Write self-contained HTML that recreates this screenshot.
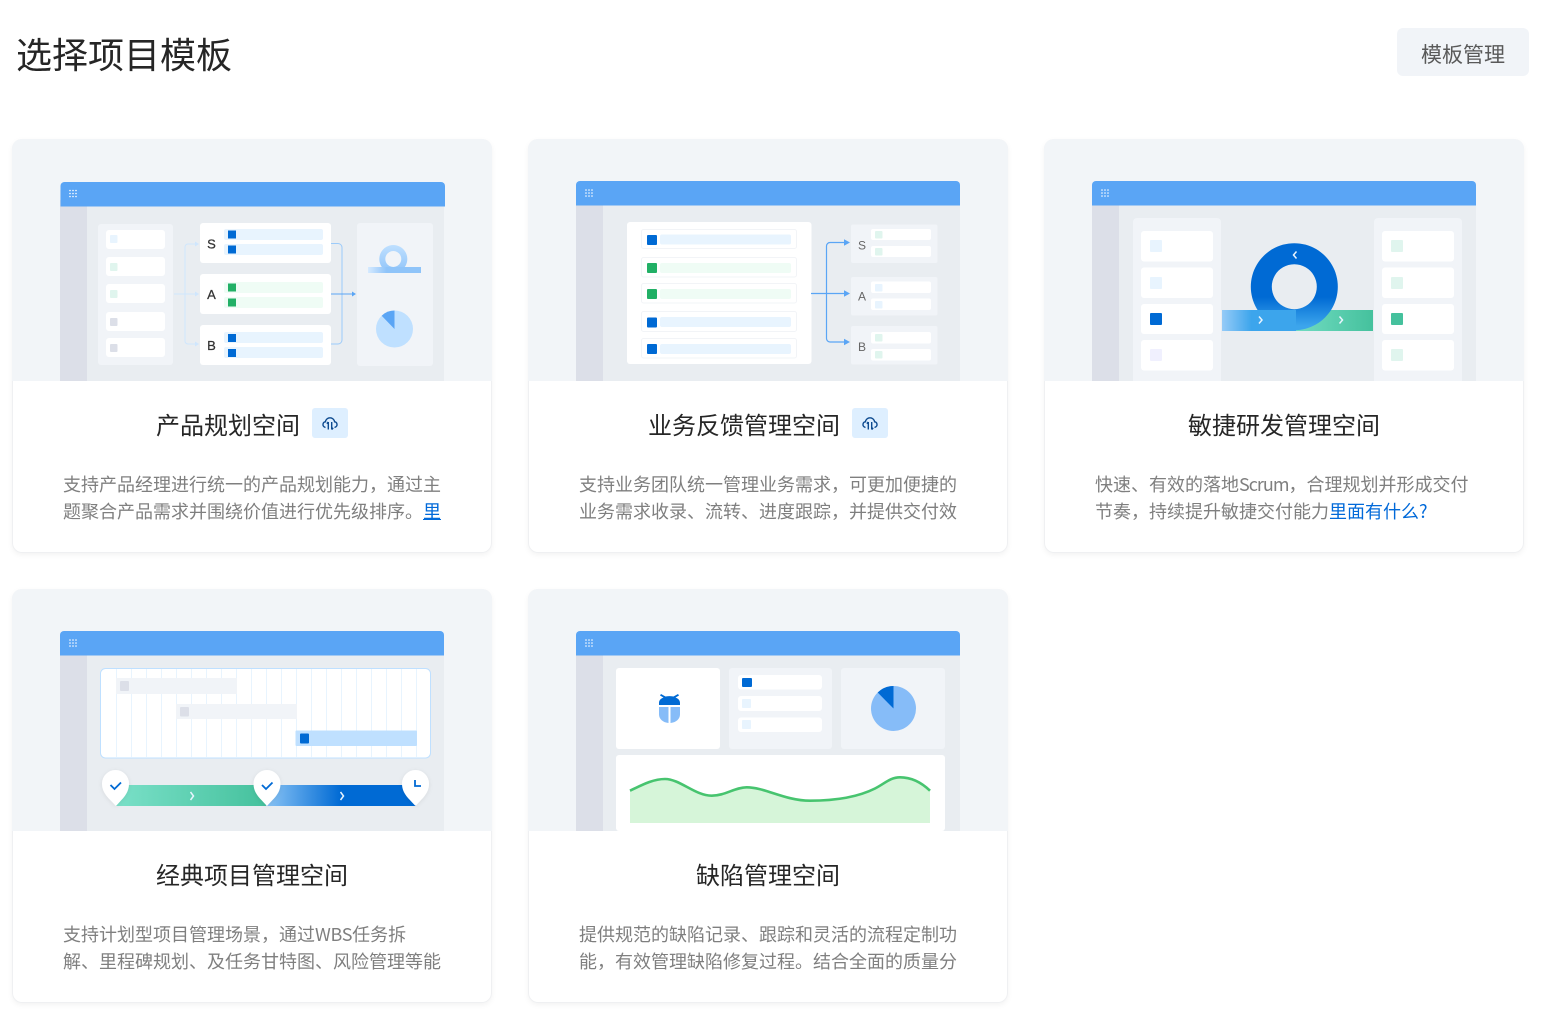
<!DOCTYPE html>
<html lang="zh-CN"><head><meta charset="utf-8"><title>选择项目模板</title>
<style>
*{box-sizing:border-box}
html,body{margin:0;padding:0;background:#fff}
body{width:1557px;height:1020px;position:relative;overflow:hidden;font-family:"Liberation Sans","Noto Sans CJK SC",sans-serif}
h1{position:absolute;left:16px;top:30px;margin:0;font-size:36px;line-height:52px;font-weight:400;color:#262626}
.btn{position:absolute;left:1397px;top:28px;width:132px;height:48px;border-radius:6px;background:#f1f4f8;color:#595959;font-size:21px;line-height:56px;text-align:center}
.card{position:absolute;width:480px;height:413.500px;border-radius:10px;background:#fff;box-shadow:inset 0 0 0 1px #eff0f2,0 2px 6px rgba(0,0,0,.05);overflow:hidden}
.top{position:absolute;left:0;top:0;width:480px;height:242px;background:#f2f5f8}
.top svg{display:block}
.t{position:absolute;left:0;right:0;top:266px;height:44px;display:flex;justify-content:center;align-items:center;font-size:24px;line-height:44px;color:#262626;white-space:nowrap}
.badge{display:inline-block;width:36px;height:30px;margin-left:12px;border-radius:3px;background:#deefff;position:relative;top:-4px}
.badge svg{position:absolute;left:10px;top:7px}
.d{position:absolute;left:51px;top:332px;width:400px;font-family:"Noto Sans CJK SC","Liberation Sans",sans-serif;font-size:18px;line-height:27px;color:#7f7f7f;white-space:nowrap}
.d a{color:#0069d9;text-decoration:none}
.d a.u{text-decoration:underline}
</style></head><body>
<h1>选择项目模板</h1>
<div class="btn">模板管理</div>

<div class="card" style="left:12px;top:139px">
<div class="top"><svg width="480" height="242" viewBox="12 139 480 242" xmlns="http://www.w3.org/2000/svg">
<defs><linearGradient id="m1" x1="0" x2="1" y1="0" y2="0"><stop offset="0" stop-color="#d6eaff"/><stop offset=".35" stop-color="#8fc4f9"/><stop offset="1" stop-color="#8fc4f9"/></linearGradient>
<linearGradient id="m2" x1="0" x2="0" y1="0" y2="1"><stop offset="0" stop-color="#bfe0ff"/><stop offset="1" stop-color="#8fc4f9"/></linearGradient></defs>
<rect x="60" y="190" width="384" height="191" fill="#e9edf1"/><rect x="60" y="200" width="27" height="181" fill="#dcdfe8"/>
<path d="M60.500 206.500V186a4 4 0 0 1 4-4H441a4 4 0 0 1 4 4v20.500z" fill="#5aa5f5"/>
<g fill="#fff"><circle cx="70" cy="190.500" r=".8"/><circle cx="73" cy="190.500" r=".8"/><circle cx="76" cy="190.500" r=".8"/><circle cx="70" cy="193.500" r=".8"/><circle cx="73" cy="193.500" r=".8"/><circle cx="76" cy="193.500" r=".8"/><circle cx="70" cy="196.500" r=".8"/><circle cx="73" cy="196.500" r=".8"/><circle cx="76" cy="196.500" r=".8"/></g>
<rect x="98" y="224" width="75" height="141" rx="3" fill="#f1f4f8"/>
<g fill="#fff"><rect x="106" y="230" width="59" height="19" rx="3"/><rect x="106" y="257" width="59" height="19" rx="3"/><rect x="106" y="284" width="59" height="19" rx="3"/><rect x="106" y="312" width="59" height="19" rx="3"/><rect x="106" y="338" width="59" height="19" rx="3"/></g>
<rect x="110" y="235" width="7.500" height="8" rx="1" fill="#e8f4fe"/><rect x="110" y="263" width="7.500" height="8" rx="1" fill="#e0f5ee"/><rect x="110" y="290" width="7.500" height="8" rx="1" fill="#e0f5ee"/><rect x="110" y="318" width="7.500" height="8" rx="1" fill="#dcdfe8"/><rect x="110" y="344" width="7.500" height="8" rx="1" fill="#dcdfe8"/>
<g fill="none" stroke="#cfe6fd" stroke-width="1"><path d="M174 294H197M197 244H188a3 3 0 0 0-3 3V341a3 3 0 0 0 3 3H197"/></g>
<g fill="#cfe6fd"><path d="M199 244l-4-2.500v5zM199 294l-4-2.500v5zM199 344l-4-2.500v5z"/></g>
<g fill="#fff"><rect x="200" y="223" width="131" height="40" rx="3"/><rect x="200" y="274" width="131" height="40" rx="3"/><rect x="200" y="325" width="131" height="40" rx="3"/></g>
<g fill="#e8f4fe"><rect x="224" y="229" width="99" height="11" rx="2"/><rect x="224" y="244" width="99" height="11" rx="2"/><rect x="224" y="332" width="99" height="11" rx="2"/><rect x="224" y="347" width="99" height="11" rx="2"/></g>
<g fill="#effcf5"><rect x="224" y="282" width="99" height="11" rx="2"/><rect x="224" y="297" width="99" height="11" rx="2"/></g>
<g fill="#006ad4"><rect x="228" y="230.500" width="8" height="8"/><rect x="228" y="245.500" width="8" height="8"/><rect x="228" y="334" width="8" height="8"/><rect x="228" y="349" width="8" height="8"/></g>
<g fill="#22b066"><rect x="228" y="283.500" width="8" height="8"/><rect x="228" y="298.500" width="8" height="8"/></g>
<g font-family="Liberation Sans" font-size="13" fill="#333" stroke="#333" stroke-width=".25" text-anchor="middle"><text x="211.500" y="248.500">S</text><text x="211.500" y="299">A</text><text x="211.500" y="350">B</text></g>
<path d="M331 243.500H338a4 4 0 0 1 4 4V340a4 4 0 0 1-4 4H331" fill="none" stroke="#9ccbfa" stroke-width="1"/>
<path d="M331 294H352" stroke="#5aa5f5" stroke-width="1" fill="none"/><path d="M356 294l-4-2.500v5z" fill="#5aa5f5"/>
<rect x="357" y="223" width="76" height="143" rx="3" fill="#f1f4f8"/>
<path d="M393.300 245a14 14 0 1 0 .01 0zM393.300 251a8 8 0 1 1-.01 0z" fill="url(#m2)" fill-rule="evenodd"/>
<rect x="368" y="267" width="53" height="6" fill="url(#m1)"/>
<circle cx="394.500" cy="329" r="18.500" fill="#bfe0ff"/><path d="M394.500 329V310.500A18.500 18.500 0 0 0 381.700 315.700z" fill="#5aa5f5"/>
</svg></div>
<div class="t">产品规划空间<span class="badge"><svg width="16" height="16" viewBox="0 0 16 16" fill="none" stroke="#0d4a8f" stroke-width="1.400"><path d="M3.500 12.500C1.500 12 .8 10.500 1 9.200 1.200 7.800 2.300 6.900 3.400 6.800 3.800 4.300 5.800 2.800 8 2.800s4.200 1.500 4.600 4c1.100.1 2.200 1 2.400 2.400.2 1.300-.5 2.800-2.500 3.300"/><path d="M6.300 14.500V7M4.800 8.600 6.300 7M9.700 7v7.500M9.700 14.500l1.500-1.600"/></svg></span></div>
<div class="d">支持产品经理进行统一的产品规划能力，通过主<br>题聚合产品需求并围绕价值进行优先级排序。<a class="u" href="#">里</a></div>
</div>

<div class="card" style="left:528px;top:139px">
<div class="top"><svg width="480" height="242" viewBox="528 139 480 242" xmlns="http://www.w3.org/2000/svg">
<rect x="576" y="190" width="384" height="191" fill="#e9edf1"/><rect x="576" y="200" width="27" height="181" fill="#dcdfe8"/>
<path d="M576 205.500V185a4 4 0 0 1 4-4H956a4 4 0 0 1 4 4v20.500z" fill="#5aa5f5"/>
<g fill="#fff"><circle cx="586" cy="190" r=".8"/><circle cx="589" cy="190" r=".8"/><circle cx="592" cy="190" r=".8"/><circle cx="586" cy="193" r=".8"/><circle cx="589" cy="193" r=".8"/><circle cx="592" cy="193" r=".8"/><circle cx="586" cy="196" r=".8"/><circle cx="589" cy="196" r=".8"/><circle cx="592" cy="196" r=".8"/></g>
<rect x="627" y="222" width="184.500" height="142" rx="3" fill="#fff"/>
<g fill="#fff" stroke="#f2f4f7"><rect x="641.500" y="229.500" width="155" height="19" rx="2"/><rect x="641.500" y="257.500" width="155" height="19.500" rx="2"/><rect x="641.500" y="283.500" width="155" height="19.500" rx="2"/><rect x="641.500" y="311.500" width="155" height="20" rx="2"/><rect x="641.500" y="338.500" width="155" height="19.500" rx="2"/></g>
<g fill="#e8f4fe"><rect x="660" y="234.500" width="131" height="10" rx="2"/><rect x="660" y="317" width="131" height="10" rx="2"/><rect x="660" y="344" width="131" height="10" rx="2"/></g>
<g fill="#effcf5"><rect x="660" y="263" width="131" height="10" rx="2"/><rect x="660" y="289" width="131" height="10" rx="2"/></g>
<g fill="#006ad4"><rect x="647" y="235" width="10" height="10" rx="1"/><rect x="647" y="317.500" width="10" height="10" rx="1"/><rect x="647" y="344" width="10" height="10" rx="1"/></g>
<g fill="#22b066"><rect x="647" y="263" width="10" height="10" rx="1"/><rect x="647" y="289" width="10" height="10" rx="1"/></g>
<path d="M811 293.500H845M845 242.500H830a3.500 3.500 0 0 0-3.500 3.500V338.500a3.500 3.500 0 0 0 3.500 3.500H845" fill="none" stroke="#5aa5f5" stroke-width="1.200"/>
<path d="M850 242.500l-6-3.200v6.400zM850 293.500l-6-3.200v6.400zM850 342l-6-3.200v6.400z" fill="#5aa5f5"/>
<g fill="#f1f4f8"><rect x="851" y="224.500" width="86.500" height="38.500" rx="2"/><rect x="851" y="277" width="86.500" height="38.500" rx="2"/><rect x="851" y="326" width="86.500" height="38.500" rx="2"/></g>
<g fill="#fff"><rect x="871" y="229" width="60" height="11" rx="2"/><rect x="871" y="246" width="60" height="11" rx="2"/><rect x="871" y="281.500" width="60" height="11.500" rx="2"/><rect x="871" y="298.500" width="60" height="11.500" rx="2"/><rect x="871" y="332" width="60" height="11.500" rx="2"/><rect x="871" y="349" width="60" height="11.500" rx="2"/></g>
<g fill="#e0f5ee"><rect x="875" y="231" width="7.500" height="7.500" rx="1"/><rect x="875" y="248" width="7.500" height="7.500" rx="1"/><rect x="875" y="334" width="7.500" height="7.500" rx="1"/><rect x="875" y="351" width="7.500" height="7.500" rx="1"/></g>
<g fill="#e8f4fe"><rect x="875" y="284" width="7.500" height="7.500" rx="1"/><rect x="875" y="301" width="7.500" height="7.500" rx="1"/></g>
<g font-family="Liberation Sans" font-size="12" fill="#666" text-anchor="middle"><text x="862" y="249.500">S</text><text x="862" y="300.500">A</text><text x="862" y="351">B</text></g>
</svg></div>
<div class="t">业务反馈管理空间<span class="badge"><svg width="16" height="16" viewBox="0 0 16 16" fill="none" stroke="#0d4a8f" stroke-width="1.400"><path d="M3.500 12.500C1.500 12 .8 10.500 1 9.200 1.200 7.800 2.300 6.900 3.400 6.800 3.800 4.300 5.800 2.800 8 2.800s4.200 1.500 4.600 4c1.100.1 2.200 1 2.400 2.400.2 1.300-.5 2.800-2.500 3.300"/><path d="M6.300 14.500V7M4.800 8.600 6.300 7M9.700 7v7.500M9.700 14.500l1.500-1.600"/></svg></span></div>
<div class="d">支持业务团队统一管理业务需求，可更加便捷的<br>业务需求收录、流转、进度跟踪，并提供交付效</div>
</div>

<div class="card" style="left:1044px;top:139px">
<div class="top"><svg width="480" height="242" viewBox="1044 139 480 242" xmlns="http://www.w3.org/2000/svg">
<defs><linearGradient id="r1" x1="0" x2="0" y1="0" y2="1"><stop offset="0" stop-color="#006ad4"/><stop offset=".62" stop-color="#006ad4"/><stop offset=".95" stop-color="#3ca5ec"/></linearGradient>
<linearGradient id="b1" x1="0" x2="1" y1="0" y2="0"><stop offset="0" stop-color="#96cbf7"/><stop offset=".4" stop-color="#3ca5ec"/><stop offset="1" stop-color="#3ca5ec"/></linearGradient>
<linearGradient id="g1" x1="0" x2="1" y1="0" y2="0"><stop offset="0" stop-color="#72dcc2"/><stop offset="1" stop-color="#45c19d"/></linearGradient></defs>
<rect x="1092" y="190" width="384" height="191" fill="#e9edf1"/><rect x="1092" y="200" width="27" height="181" fill="#dcdfe8"/>
<path d="M1092 205.500V185a4 4 0 0 1 4-4H1472a4 4 0 0 1 4 4v20.500z" fill="#5aa5f5"/>
<g fill="#fff"><circle cx="1102" cy="190" r=".8"/><circle cx="1105" cy="190" r=".8"/><circle cx="1108" cy="190" r=".8"/><circle cx="1102" cy="193" r=".8"/><circle cx="1105" cy="193" r=".8"/><circle cx="1108" cy="193" r=".8"/><circle cx="1102" cy="196" r=".8"/><circle cx="1105" cy="196" r=".8"/><circle cx="1108" cy="196" r=".8"/></g>
<path d="M1133 381V222a4 4 0 0 1 4-4h80a4 4 0 0 1 4 4v159zM1374 381V222a4 4 0 0 1 4-4h80a4 4 0 0 1 4 4v159z" fill="#f1f4f8"/>
<g fill="#fff"><rect x="1141" y="231" width="72" height="30.500" rx="3"/><rect x="1141" y="267.500" width="72" height="30.500" rx="3"/><rect x="1141" y="304" width="72" height="30" rx="3"/><rect x="1141" y="340" width="72" height="30.500" rx="3"/><rect x="1382" y="231" width="72" height="30.500" rx="3"/><rect x="1382" y="267.500" width="72" height="30.500" rx="3"/><rect x="1382" y="304" width="72" height="30" rx="3"/><rect x="1382" y="340" width="72" height="30.500" rx="3"/></g>
<rect x="1150" y="240" width="12" height="12" rx="1" fill="#e8f4fe"/><rect x="1150" y="277" width="12" height="12" rx="1" fill="#e8f4fe"/><rect x="1150" y="313" width="12" height="12" rx="1" fill="#006ad4"/><rect x="1150" y="349" width="12" height="12" rx="1" fill="#f0f0fe"/>
<rect x="1391" y="240" width="12" height="12" rx="1" fill="#e0f5ee"/><rect x="1391" y="277" width="12" height="12" rx="1" fill="#e0f5ee"/><rect x="1391" y="313" width="12" height="12" rx="1" fill="#45c19d"/><rect x="1391" y="349" width="12" height="12" rx="1" fill="#e0f5ee"/>
<rect x="1295" y="310" width="78" height="21" fill="url(#g1)"/>
<path d="M1294.300 243.200a43.500 43.500 0 1 0 .01 0zM1294.300 264.200a22.500 22.500 0 1 1-.01 0z" fill="url(#r1)" fill-rule="evenodd"/>
<rect x="1222" y="310" width="74" height="21" fill="url(#b1)"/>
<g fill="none" stroke="#e8f4fe" stroke-width="1.500"><path d="M1296.500 251.500l-3 3.500 3 3.500M1259 316.500l3 3.500-3 3.500M1339.500 316.500l3 3.500-3 3.500"/></g>
</svg></div>
<div class="t">敏捷研发管理空间</div>
<div class="d">快速、有效的落地<span style="letter-spacing:-1px">Scrum</span>，合理规划并形成交付<br>节奏，持续提升敏捷交付能力<a href="#">里面有什么?</a></div>
</div>

<div class="card" style="left:12px;top:589px">
<div class="top"><svg width="480" height="242" viewBox="12 589 480 242" xmlns="http://www.w3.org/2000/svg">
<defs><linearGradient id="g2" x1="0" x2="1" y1="0" y2="0"><stop offset="0" stop-color="#7ae0c8"/><stop offset="1" stop-color="#45c19d"/></linearGradient>
<linearGradient id="b2" x1="0" x2="1" y1="0" y2="0"><stop offset="0" stop-color="#8ac4f5"/><stop offset=".5" stop-color="#006ad4"/><stop offset="1" stop-color="#006ad4"/></linearGradient>
<filter id="ps" x="-30%" y="-30%" width="160%" height="160%"><feDropShadow dx="0" dy="1" stdDeviation="2" flood-color="#000" flood-opacity=".08"/></filter></defs>
<rect x="60" y="640" width="384" height="191" fill="#e9edf1"/><rect x="60" y="650" width="27" height="181" fill="#dcdfe8"/>
<path d="M60 655.500V635a4 4 0 0 1 4-4H440a4 4 0 0 1 4 4v20.500z" fill="#5aa5f5"/>
<g fill="#fff"><circle cx="70" cy="640" r=".8"/><circle cx="73" cy="640" r=".8"/><circle cx="76" cy="640" r=".8"/><circle cx="70" cy="643" r=".8"/><circle cx="73" cy="643" r=".8"/><circle cx="76" cy="643" r=".8"/><circle cx="70" cy="646" r=".8"/><circle cx="73" cy="646" r=".8"/><circle cx="76" cy="646" r=".8"/></g>
<rect x="100.500" y="668.500" width="330" height="89.500" rx="5" fill="#fff" stroke="#bfe0ff"/>
<path d="M116.500 669V757M131.500 669V757M146.500 669V757M161.500 669V757M176.500 669V757M191.500 669V757M206.500 669V757M221.500 669V757M236.500 669V757M251.500 669V757M266.500 669V757M281.500 669V757M296.500 669V757M311.500 669V757M326.500 669V757M341.500 669V757M356.500 669V757M371.500 669V757M386.500 669V757M401.500 669V757M416.500 669V757" stroke="#e8f4fe" stroke-width="1" fill="none"/>
<rect x="116" y="678" width="121" height="16" fill="#f1f4f8"/><rect x="120" y="681" width="9" height="10" rx="1" fill="#dcdfe8"/>
<rect x="176" y="704" width="121" height="15" fill="#f1f4f8"/><rect x="180" y="707" width="9" height="9.500" rx="1" fill="#dcdfe8"/>
<rect x="295.500" y="730.500" width="121.500" height="15.500" rx="1" fill="#bfe0ff"/><rect x="300" y="733.500" width="9" height="10" rx="1" fill="#006ad4"/>
<rect x="116" y="785" width="150" height="21" fill="url(#g2)"/><rect x="266" y="785" width="150" height="21" fill="url(#b2)"/>
<g fill="#fff" filter="url(#ps)"><path d="M116 806C110 799 102 794 102 783.500a13.500 13.500 0 0 1 27 0C129 794 122 799 116 806z"/><path d="M267 806C261 799 253.500 794 253.500 783.500a13.500 13.500 0 0 1 27 0C280.500 794 273 799 267 806z"/><path d="M415.500 806C409.500 799 402 794 402 783.500a13.500 13.500 0 0 1 27 0C429 794 421.500 799 415.500 806z"/></g>
<g fill="none" stroke="#006ad4" stroke-width="1.800"><path d="M110.500 785l4 4 6.500-6.500M262 785l4 4 6.500-6.500M415 780v6h6"/></g>
<path d="M190.500 792l3 4-3 4M340.500 792l3 4-3 4" fill="none" stroke="#e8f4fe" stroke-width="1.500"/>
</svg></div>
<div class="t">经典项目管理空间</div>
<div class="d">支持计划型项目管理场景，通过<span style="letter-spacing:-.33px">WBS</span>任务拆<br>解、里程碑规划、及任务甘特图、风险管理等能</div>
</div>

<div class="card" style="left:528px;top:589px">
<div class="top"><svg width="480" height="242" viewBox="528 589 480 242" xmlns="http://www.w3.org/2000/svg">
<rect x="576" y="640" width="384" height="191" fill="#e9edf1"/><rect x="576" y="650" width="27" height="181" fill="#dcdfe8"/>
<path d="M576 655.500V635a4 4 0 0 1 4-4H956a4 4 0 0 1 4 4v20.500z" fill="#5aa5f5"/>
<g fill="#fff"><circle cx="586" cy="640" r=".8"/><circle cx="589" cy="640" r=".8"/><circle cx="592" cy="640" r=".8"/><circle cx="586" cy="643" r=".8"/><circle cx="589" cy="643" r=".8"/><circle cx="592" cy="643" r=".8"/><circle cx="586" cy="646" r=".8"/><circle cx="589" cy="646" r=".8"/><circle cx="592" cy="646" r=".8"/></g>
<rect x="616" y="668" width="104" height="81" rx="3" fill="#fff"/><rect x="729" y="668" width="103" height="81" rx="3" fill="#f1f4f8"/><rect x="841" y="668" width="104" height="81" rx="3" fill="#f1f4f8"/>
<g fill="#fff"><rect x="738" y="675" width="84" height="14.500" rx="3"/><rect x="738" y="696" width="84" height="15" rx="3"/><rect x="738" y="717.500" width="84" height="14.500" rx="3"/></g>
<rect x="742" y="678" width="10" height="9" rx="1" fill="#006ad4"/><rect x="742" y="699" width="9" height="9" rx="1" fill="#e8f4fe"/><rect x="742" y="720" width="9" height="9" rx="1" fill="#e8f4fe"/>
<circle cx="893.500" cy="708.500" r="22.500" fill="#86bcf8"/><path d="M893.500 708.500V686A22.500 22.500 0 0 0 877.700 692.500z" fill="#006ad4"/>
<path d="M659 705V703C659 700 661 698.500 663.500 697.500L660 695.500 661 694 665.500 696.500C668 696 671 696 673.500 696.500L678 694 679 695.500 675.500 697.500C678 698.500 680 700 680 703V705z" fill="#006ad4"/>
<path d="M659 707H668.500V723C663 722.500 659 719 659 714.500zM670.500 707H680V714.500C680 719 676 722.500 670.500 723z" fill="#86bcf8"/>
<rect x="616" y="755" width="329" height="76" rx="3" fill="#fff"/>
<path d="M630 790.700C642 785 653 779 665 779C680 779 695 795.700 711.700 795.700C725 795.700 735 787.300 746.700 787.300C765 787.300 785 800.700 810 800.700C840 800.700 860 796 875 788.500C885 783.500 890 777.300 900 777.300C912 777.300 922 783 930 790.700V823H630z" fill="#d6f5d9"/>
<path d="M630 790.700C642 785 653 779 665 779C680 779 695 795.700 711.700 795.700C725 795.700 735 787.300 746.700 787.300C765 787.300 785 800.700 810 800.700C840 800.700 860 796 875 788.500C885 783.500 890 777.300 900 777.300C912 777.300 922 783 930 790.700" fill="none" stroke="#47c46f" stroke-width="2.600"/>
</svg></div>
<div class="t">缺陷管理空间</div>
<div class="d">提供规范的缺陷记录、跟踪和灵活的流程定制功<br>能，有效管理缺陷修复过程。结合全面的质量分</div>
</div>
</body></html>
